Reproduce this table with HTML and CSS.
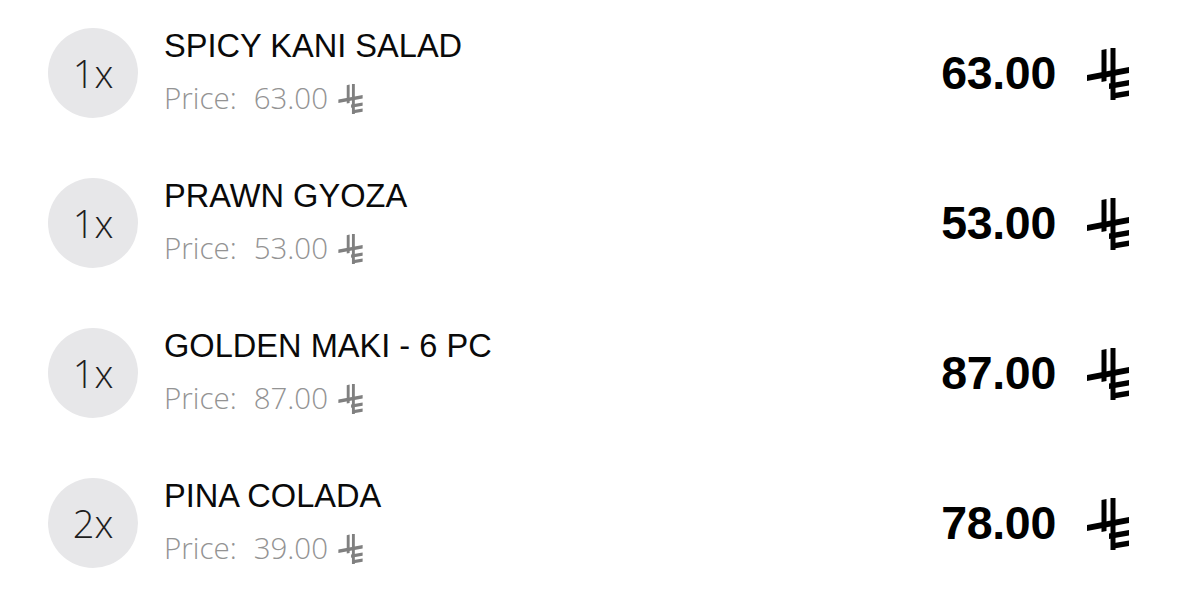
FILE: index.html
```html
<!DOCTYPE html>
<html lang="en">
<head>
    <meta charset="UTF-8">
    <meta name="viewport" content="width=device-width, initial-scale=1.0">
    <title>Order Items</title>
    <link rel="stylesheet" href="styles.css">
</head>
<body>
    <svg width="0" height="0" class="defs">
        <symbol id="riyal" viewBox="0 0 44 52">
            <!-- Saudi riyal sign -->
            <polygon points="15.5,2 20.5,1 20.5,33 15.5,34"/>
            <polygon points="24.5,0 29.5,0 29.5,52 24.5,52"/>
            <polygon points="1,27 43,19 43,25 1,33"/>
            <polygon points="23,35.5 43,32 43,37.5 23,41"/>
            <polygon points="25,45.5 43,42.5 43,48 25,51"/>
        </symbol>
    </svg>

    <div class="order-list">
        <div class="order-item">
            <div class="qty">1x</div>
            <div class="info">
                <div class="name">SPICY KANI SALAD</div>
                <div class="price"><span class="label">Price:</span><span class="amount">63.00</span><svg class="sar sar-small"><use href="#riyal"/></svg></div>
            </div>
            <div class="total"><span>63.00</span><svg class="sar sar-big"><use href="#riyal"/></svg></div>
        </div>

        <div class="order-item">
            <div class="qty">1x</div>
            <div class="info">
                <div class="name">PRAWN GYOZA</div>
                <div class="price"><span class="label">Price:</span><span class="amount">53.00</span><svg class="sar sar-small"><use href="#riyal"/></svg></div>
            </div>
            <div class="total"><span>53.00</span><svg class="sar sar-big"><use href="#riyal"/></svg></div>
        </div>

        <div class="order-item">
            <div class="qty">1x</div>
            <div class="info">
                <div class="name">GOLDEN MAKI - 6 PC</div>
                <div class="price"><span class="label">Price:</span><span class="amount">87.00</span><svg class="sar sar-small"><use href="#riyal"/></svg></div>
            </div>
            <div class="total"><span>87.00</span><svg class="sar sar-big"><use href="#riyal"/></svg></div>
        </div>

        <div class="order-item">
            <div class="qty">2x</div>
            <div class="info">
                <div class="name">PINA COLADA</div>
                <div class="price"><span class="label">Price:</span><span class="amount">39.00</span><svg class="sar sar-small"><use href="#riyal"/></svg></div>
            </div>
            <div class="total"><span>78.00</span><svg class="sar sar-big"><use href="#riyal"/></svg></div>
        </div>
    </div>
</body>
</html>
```

FILE: styles.css
```css
body {
    margin: 0;
    background: #ffffff;
    font-family: "Liberation Sans", Arial, sans-serif;
    color: #111;
}
.defs {
    position: absolute;
}
.order-list {
    display: flex;
    flex-direction: column;
    gap: 60px;
    padding: 28px 49px 0 48px;
}
.order-item {
    display: flex;
    align-items: center;
    height: 90px;
}
.qty {
    width: 90px;
    height: 90px;
    border-radius: 50%;
    background: #e7e7e9;
    display: flex;
    align-items: center;
    justify-content: center;
    font-family: "Open Sans", sans-serif;
    font-weight: 300;
    font-size: 38px;
    color: #1e1e1e;
    flex-shrink: 0;
}
.info {
    flex: 1;
    margin-left: 26px;
    display: flex;
    flex-direction: column;
    gap: 16px;
    margin-top: -4px;
}
.name {
    font-size: 32.6px;
    line-height: 37px;
    color: #0a0a0a;
}
.price {
    display: flex;
    align-items: center;
    font-family: "Open Sans", sans-serif;
    font-weight: 300;
    font-size: 29.5px;
    line-height: 36px;
    color: #939393;
}
.price .amount {
    margin-left: 17px;
}
.sar {
    fill: currentColor;
}
.sar-small {
    width: 27px;
    height: 30px;
    margin-left: 9px;
    margin-top: 2px;
    fill: #808080;
}
.total {
    display: flex;
    align-items: center;
    font-size: 46.5px;
    font-weight: bold;
    color: #000;
}
.total span {
    letter-spacing: -0.3px;
}
.sar-big {
    width: 44px;
    height: 52px;
    margin-left: 30px;
    margin-top: 2px;
    fill: #000;
}
```
